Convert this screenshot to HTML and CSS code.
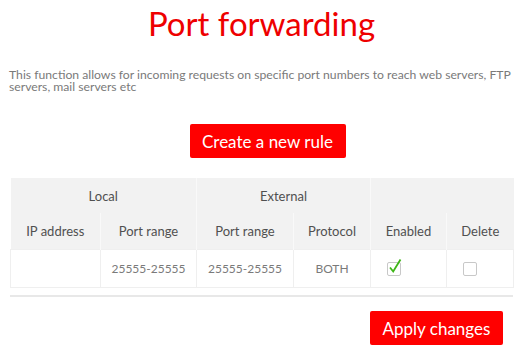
FILE: index.html
```html
<!DOCTYPE html>
<html lang="en">
<head>
    <meta charset="UTF-8">
    <meta name="viewport" content="width=device-width, initial-scale=1.0">
    <title>Port forwarding</title>
    <link rel="stylesheet" href="styles.css">
</head>
<body>

    <div class="page">
        <h1 class="title">Port forwarding</h1>

        <p class="intro">This function allows for incoming requests on specific port numbers to reach web servers, FTP servers, mail servers etc</p>

        <div class="actions center">
            <button class="btn">Create a new rule</button>
        </div>

        <table class="rules">
            <colgroup>
                <col class="c-ip">
                <col class="c-port">
                <col class="c-port2">
                <col class="c-proto">
                <col class="c-en">
                <col class="c-del">
            </colgroup>
            <tr class="group">
                <th colspan="2">Local</th>
                <th colspan="2">External</th>
                <th colspan="2"></th>
            </tr>
            <tr class="cols">
                <th>IP address</th>
                <th>Port range</th>
                <th>Port range</th>
                <th>Protocol</th>
                <th>Enabled</th>
                <th>Delete</th>
            </tr>
            <tr class="entry">
                <td></td>
                <td>25555-25555</td>
                <td>25555-25555</td>
                <td>BOTH</td>
                <td class="box-cell">
                    <span class="check">
                        <svg width="16" height="18" viewBox="0 0 16 18">
                            <path d="M3 9.5 L6.2 13.5 L13.5 1.5" fill="none" stroke="#3fb618" stroke-width="1.8"/>
                        </svg>
                    </span>
                </td>
                <td class="box-cell"><span class="check"></span></td>
            </tr>
        </table>

        <div class="divider"></div>

        <div class="actions right">
            <button class="btn">Apply changes</button>
        </div>
    </div>

</body>
</html>
```

FILE: styles.css
```css
body {
    margin: 0;
    font-family: Lato, "Noto Sans", sans-serif;
    background: #fff;
}
.page {
    padding: 0 7px 0 10px;
}
.title {
    margin: 0;
    padding-top: 3px;
    text-align: center;
    font-size: 33px;
    font-weight: 400;
    line-height: 40px;
    color: #ee0000;
}
.intro {
    margin: 26px 0 0 -1px;
    font-size: 12.2px;
    line-height: 12px;
    color: #7a7a7a;
}
.actions {
    display: flex;
}
.center {
    justify-content: center;
    margin-top: 31px;
}
.right {
    justify-content: flex-end;
    padding-right: 10px;
    margin-top: 14px;
}
.btn {
    height: 34px;
    padding: 0;
    border: none;
    border-radius: 2px;
    background: #ff0000;
    color: #fff;
    font-family: inherit;
    font-size: 17px;
    white-space: nowrap;
}
.center .btn {
    width: 156px;
    margin-left: 12px;
}
.right .btn {
    width: 133px;
}
.rules {
    width: 503px;
    margin-top: 20px;
    border-collapse: collapse;
    table-layout: fixed;
}
.c-ip { width: 90px; }
.c-port { width: 96px; }
.c-port2 { width: 97px; }
.c-proto { width: 77px; }
.c-en { width: 76px; }
.c-del { width: 67px; }
.rules th {
    padding: 0;
    background: #f2f2f2;
    font-weight: 400;
    font-size: 13px;
    color: #505050;
    border-left: 1px solid #f9f9f9;
}
.rules th:first-child {
    border-left: none;
}
.group th {
    height: 35px;
}
.cols th {
    height: 36px;
}
.entry td {
    padding: 0;
    height: 37px;
    text-align: center;
    font-size: 12px;
    color: #7a7a7a;
    border: 1px solid #efefef;
}
.entry .box-cell {
    text-align: left;
    padding-left: 16px;
}
.check {
    display: inline-block;
    position: relative;
    width: 12px;
    height: 12px;
    border: 1px solid #c8c8c8;
    border-radius: 2px;
    vertical-align: middle;
}
.check svg {
    position: absolute;
    left: -1px;
    top: -5px;
}
.divider {
    margin-top: 7px;
    width: 503px;
    border-top: 2px solid #e8e8e8;
}
```
